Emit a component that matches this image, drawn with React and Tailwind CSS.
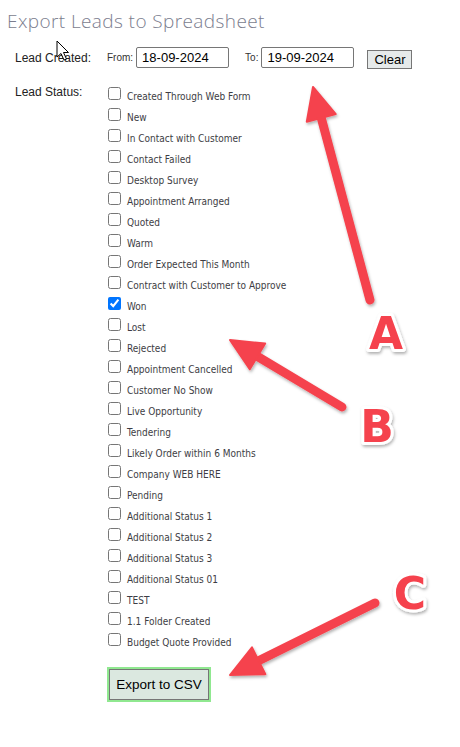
import React from 'react';

const statuses = [
  'Created Through Web Form',
  'New',
  'In Contact with Customer',
  'Contact Failed',
  'Desktop Survey',
  'Appointment Arranged',
  'Quoted',
  'Warm',
  'Order Expected This Month',
  'Contract with Customer to Approve',
  'Won',
  'Lost',
  'Rejected',
  'Appointment Cancelled',
  'Customer No Show',
  'Live Opportunity',
  'Tendering',
  'Likely Order within 6 Months',
  'Company WEB HERE',
  'Pending',
  'Additional Status 1',
  'Additional Status 2',
  'Additional Status 3',
  'Additional Status 01',
  'TEST',
  '1.1 Folder Created',
  'Budget Quote Provided',
];

const RED = '#f5434d';

// annotation arrow: shaft from tail to the head base, triangle head at tip
const Arrow = ({ tail, tip, head = 32, width = 30 }) => {
  const dx = tip[0] - tail[0];
  const dy = tip[1] - tail[1];
  const len = Math.hypot(dx, dy);
  const ux = dx / len;
  const uy = dy / len;
  const bx = tip[0] - ux * head;
  const by = tip[1] - uy * head;
  const px = -uy * (width / 2);
  const py = ux * (width / 2);
  return (
    <g filter="url(#shadow)">
      <line
        x1={tail[0]}
        y1={tail[1]}
        x2={bx + ux * 4}
        y2={by + uy * 4}
        stroke={RED}
        strokeWidth="9"
        strokeLinecap="round"
      />
      <polygon
        points={`${tip[0]},${tip[1]} ${bx + px},${by + py} ${bx - px},${by - py}`}
        fill={RED}
        stroke={RED}
        strokeWidth="2"
        strokeLinejoin="round"
      />
    </g>
  );
};

const Letter = ({ x, y, children }) => (
  <text
    x={x}
    y={y}
    textAnchor="middle"
    fontFamily="'DejaVu Sans', sans-serif"
    fontWeight="bold"
    fontSize="44"
    fill={RED}
    stroke="#ffffff"
    strokeWidth="6"
    strokeLinejoin="round"
    paintOrder="stroke"
    filter="url(#shadow)"
  >
    {children}
  </text>
);

export default function App() {
  return (
    <div className="relative w-[460px] h-[747px] bg-white overflow-hidden font-['Liberation_Sans',Arial,sans-serif]">
      <h1 className="pl-[7px] pt-[9px] h-[47px] text-[19px] leading-[24px] font-light tracking-[0.4px] text-[#7b7d8e] font-['Open_Sans',sans-serif]">
        Export Leads to Spreadsheet
      </h1>

      <div className="flex items-center h-[21px] pl-[15px]">
        <span className="w-[92px] text-[12px] text-[#222]">Lead Created:</span>
        <span className="text-[10px] text-[#333] mr-[3px]">From:</span>
        <div className="w-[93px] h-[21px] border border-[#767676] rounded-[2px] pl-[5px] text-[13px] leading-[19px] text-black">
          18-09-2024
        </div>
        <span className="text-[10px] text-[#333] ml-[16px] mr-[3px]">To:</span>
        <div className="w-[93px] h-[21px] border border-[#767676] rounded-[2px] pl-[5px] text-[13px] leading-[19px] text-black">
          19-09-2024
        </div>
        <button className="ml-[13px] mt-[3px] w-[45px] h-[19px] border border-[#767676] bg-[#e6eaea] text-[13px] leading-[17px] text-black">
          Clear
        </button>
      </div>

      <div className="flex pl-[15px] mt-[16px]">
        <span className="w-[93px] text-[12px] leading-[14px] pt-[1px] text-[#222]">Lead Status:</span>
        <ul>
          {statuses.map((s) => (
            <li key={s} className="flex items-start h-[21px]">
              <input
                type="checkbox"
                defaultChecked={s === 'Won'}
                className="m-0 mt-[3px] w-[13px] h-[13px] accent-[#0075ff]"
              />
              <span className="ml-[6px] mt-[7px] text-[10px] leading-[12px] text-[#3d3d44] font-['DejaVu_Sans_Condensed','DejaVu_Sans',sans-serif] [font-stretch:condensed]">
                {s}
              </span>
            </li>
          ))}
        </ul>
      </div>

      <div className="pl-[107px] mt-[16px]">
        <button className="border-2 border-[#90e890] bg-[#90e890]">
          <span className="block w-[100px] h-[31px] border border-[#767676] bg-[#dbe8e0] text-[13.5px] leading-[29px] text-black">
            Export to CSV
          </span>
        </button>
      </div>

      <svg className="absolute inset-0 pointer-events-none" width="460" height="747" viewBox="0 0 460 747">
        <defs>
          <filter id="shadow" x="-20%" y="-20%" width="140%" height="140%">
            <feDropShadow dx="1" dy="2" stdDeviation="1.5" floodColor="#000" floodOpacity="0.3" />
          </filter>
        </defs>
        <Arrow tail={[370, 300]} tip={[313, 87]} />
        <Arrow tail={[342, 407]} tip={[230, 340]} />
        <Arrow tail={[375, 603]} tip={[230, 675]} />
        <Letter x={386} y={349}>A</Letter>
        <Letter x={377} y={442}>B</Letter>
        <Letter x={410} y={609}>C</Letter>
        {/* mouse pointer */}
        <path
          d="M57 41 L57 57 L61 53.5 L64 60 L66.5 59 L63.5 52.5 L68.5 52.5 Z"
          fill="#fff"
          stroke="#000"
          strokeWidth="1"
          strokeLinejoin="round"
        />
      </svg>
    </div>
  );
}
